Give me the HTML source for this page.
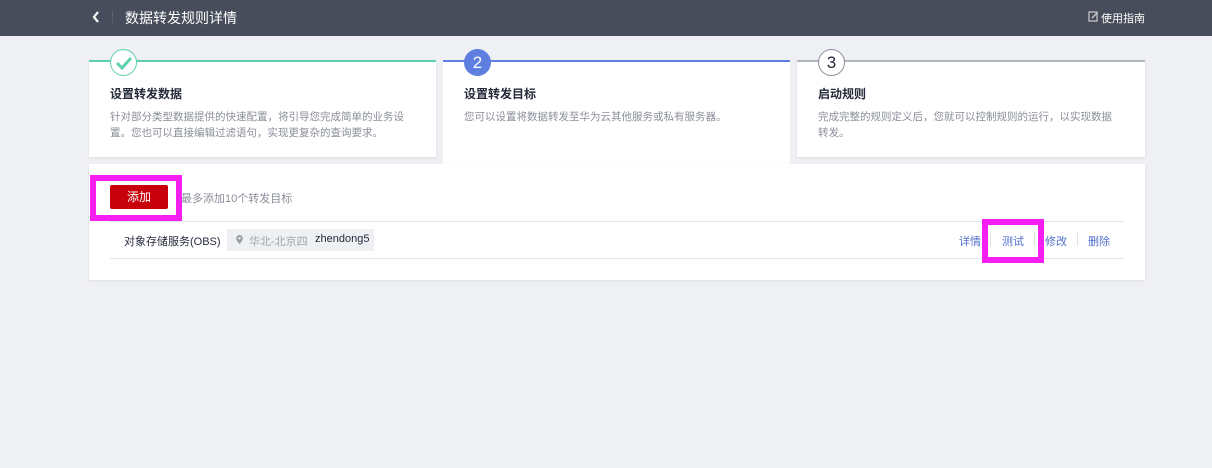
<!DOCTYPE html>
<html><head><meta charset="utf-8"><style>
*{margin:0;padding:0;box-sizing:border-box}
body{width:1212px;height:468px;background:#eff0f4;font-family:"Liberation Sans","Noto Sans CJK SC",sans-serif;position:relative;overflow:hidden}
.hd{position:absolute;left:0;top:0;width:1212px;height:36px;background:#484d5b;color:#fff}
.abs{position:absolute}
.card{position:absolute;top:60px;background:#fff;box-shadow:0 1px 3px rgba(0,0,0,.08)}
.t{position:absolute;left:21px;top:23px;font-size:12px;font-weight:bold;color:#252b3a}
.d{position:absolute;left:21px;top:47px;font-size:10.5px;line-height:16px;color:#8a8e99;white-space:nowrap}
.circ{position:absolute;top:-13px;width:27px;height:27px;border-radius:50%;font-size:17px;text-align:center;line-height:25px}
.lnk{position:absolute;top:233px;font-size:11px;color:#526ecc}
.sep{position:absolute;top:233px;width:1px;height:13px;background:#dfe1e6}
</style></head><body>
<div class="hd">
<svg class="abs" style="left:91px;top:10px" width="10" height="14"><path d="M7 2L3 7l4 5" stroke="#fff" stroke-width="2.2" fill="none"/></svg>
<div class="abs" style="left:112px;top:12px;width:1px;height:12px;border-left:1px dotted #6a6f7c"></div>
<div class="abs" style="left:125px;top:8px;font-size:14px">数据转发规则详情</div>
<svg class="abs" style="left:1088px;top:11px" width="11" height="11"><rect x="1" y="1" width="8" height="9" fill="none" stroke="#ccc" stroke-width="1.2"/><path d="M4 7l5-5" stroke="#ccc" stroke-width="1.5"/></svg>
<div class="abs" style="left:1101px;top:10px;font-size:11px">使用指南</div>
</div>

<div class="card" style="left:89px;width:347px;height:97px;border-top:2px solid #5ed0b0">
<div class="circ" style="left:21px;background:#fff;border:1px solid #5ed0b0"><svg width="25" height="25"><path d="M6 13l5 5 9-10" stroke="#5ed0b0" stroke-width="3" fill="none"/></svg></div>
<div class="t">设置转发数据</div>
<div class="d">针对部分类型数据提供的快速配置，将引导您完成简单的业务设<br>置。您也可以直接编辑过滤语句，实现更复杂的查询要求。</div>
</div>
<div class="card" style="left:443px;width:347px;height:104px;border-top:2px solid #5e7ee0;box-shadow:none">
<div class="circ" style="left:21px;background:#5e7ee0;color:#fff;border:1px solid #5e7ee0">2</div>
<div class="t">设置转发目标</div>
<div class="d">您可以设置将数据转发至华为云其他服务或私有服务器。</div>
</div>
<div class="card" style="left:797px;width:348px;height:97px;border-top:2px solid #b4b6be">
<div class="circ" style="left:21px;background:#fff;color:#252b3a;border:1px solid #8a8e99">3</div>
<div class="t">启动规则</div>
<div class="d">完成完整的规则定义后，您就可以控制规则的运行，以实现数据<br>转发。</div>
</div>

<div class="abs" style="left:89px;top:164px;width:1056px;height:116px;background:#fff;box-shadow:0 1px 3px rgba(0,0,0,.08)"></div>
<div class="abs" style="left:90px;top:175px;width:92px;height:46px;border:6px solid #f41ff0"></div>
<div class="abs" style="left:110px;top:185px;width:58px;height:24px;background:#c7000b;border-radius:2px;color:#fff;font-size:12px;text-align:center;line-height:24px">添加</div>
<div class="abs" style="left:181px;top:190px;font-size:11px;color:#8a8e99">最多添加10个转发目标</div>
<div class="abs" style="left:110px;top:221px;width:1014px;height:1px;background:#e5e6eb"></div>
<div class="abs" style="left:110px;top:258px;width:1014px;height:1px;background:#e5e6eb"></div>
<div class="abs" style="left:124px;top:233px;font-size:11px;color:#252b3a">对象存储服务(OBS)</div>
<div class="abs" style="left:227px;top:229px;width:147px;height:22px;background:#eff0f4"></div>
<svg class="abs" style="left:235px;top:234px" width="9" height="11"><path d="M4.5 1a3.3 3.3 0 0 0-3.3 3.3C1.2 7 4.5 10 4.5 10S7.8 7 7.8 4.3A3.3 3.3 0 0 0 4.5 1z" fill="#9a9ea8"/><circle cx="4.5" cy="4.3" r="1.2" fill="#eff0f4"/></svg>
<div class="abs" style="left:249px;top:233px;font-size:11px;color:#a0a4ad">华北-北京四</div>
<div class="abs" style="left:315px;top:233px;font-size:11px;color:#252b3a">zhendong5</div>
<div class="abs" style="left:982px;top:219px;width:62px;height:44px;border:6px solid #f41ff0"></div>
<div class="lnk" style="left:959px">详情</div>
<div class="sep" style="left:990px"></div>
<div class="lnk" style="left:1002px">测试</div>
<div class="sep" style="left:1034px"></div>
<div class="lnk" style="left:1045px">修改</div>
<div class="sep" style="left:1077px"></div>
<div class="lnk" style="left:1088px">删除</div>
</body></html>
